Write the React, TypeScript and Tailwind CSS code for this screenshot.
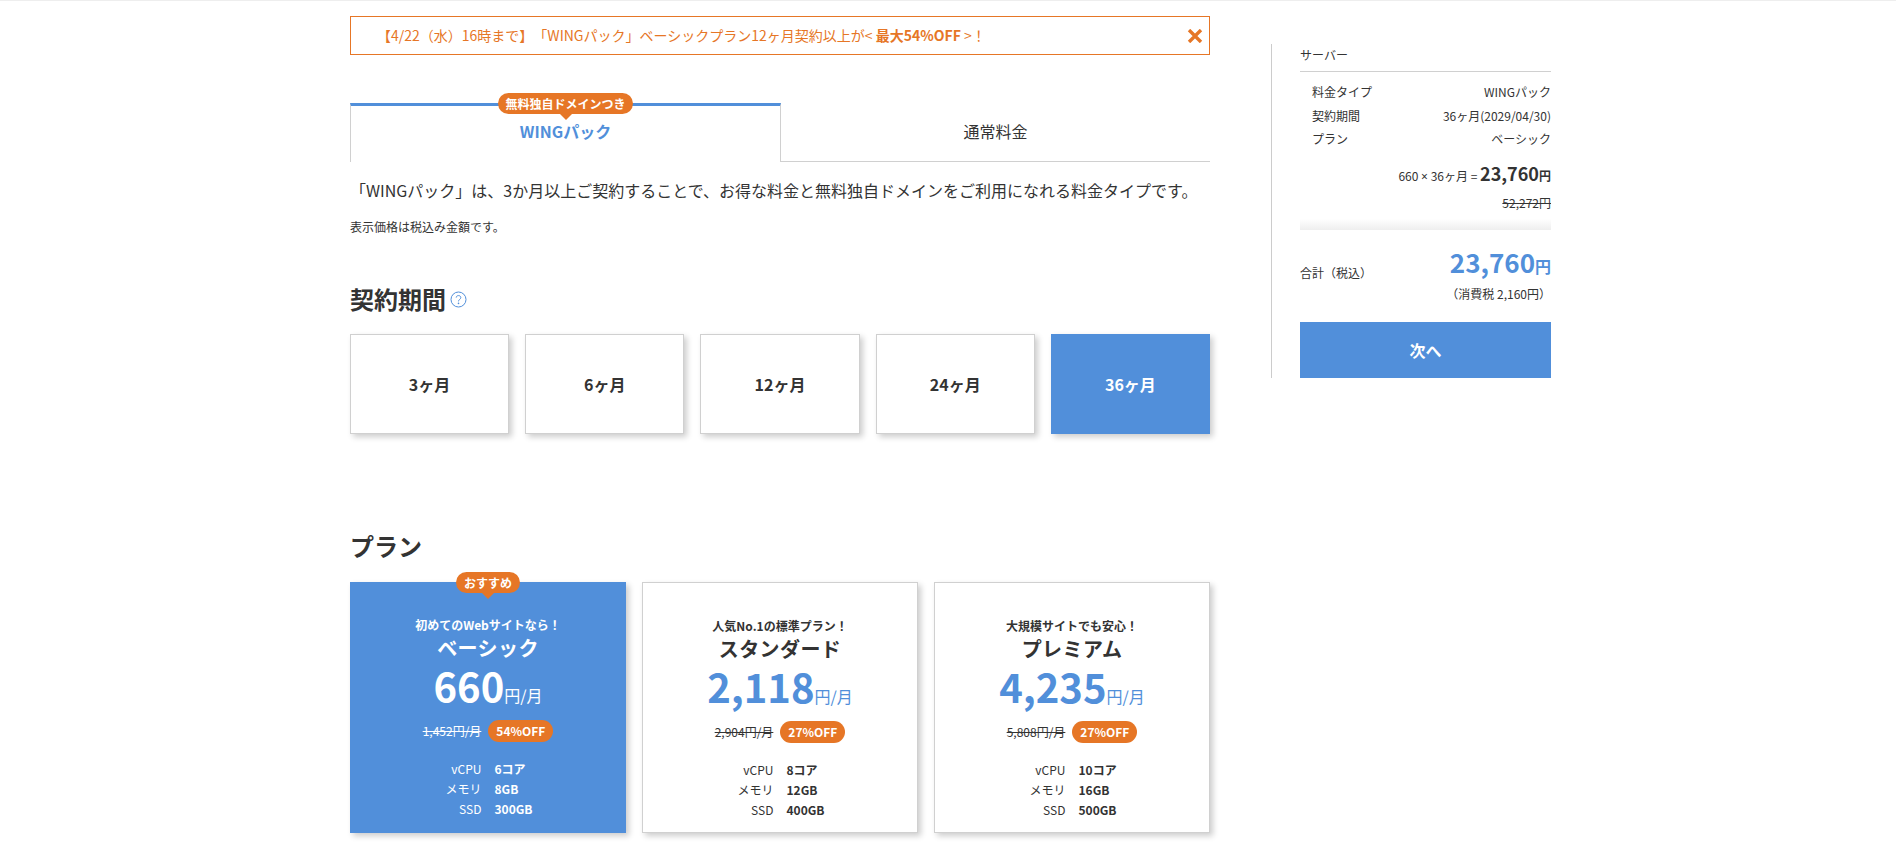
const plans = [
  { tag: "初めてのWebサイトなら！", name: "ベーシック", price: "660", old: "1,452円/月", off: "54%OFF", cpu: "6コア", mem: "8GB", ssd: "300GB", active: true },
  { tag: "人気No.1の標準プラン！", name: "スタンダード", price: "2,118", old: "2,904円/月", off: "27%OFF", cpu: "8コア", mem: "12GB", ssd: "400GB", active: false },
  { tag: "大規模サイトでも安心！", name: "プレミアム", price: "4,235", old: "5,808円/月", off: "27%OFF", cpu: "10コア", mem: "16GB", ssd: "500GB", active: false },
];

const terms = ["3ヶ月", "6ヶ月", "12ヶ月", "24ヶ月", "36ヶ月"];

const Bubble = ({ text, className }: { text: string; className: string }) => (
  <div className={`absolute flex items-center justify-center rounded-full bg-[#e67626] text-[12px] font-bold text-white ${className}`}>
    {text}
    <span className="absolute left-1/2 top-full -ml-[6px] border-x-[6px] border-t-[6px] border-x-transparent border-t-[#e67626]" />
  </div>
);

const PlanCard = ({ plan }: { plan: (typeof plans)[number] }) => {
  const on = plan.active;
  return (
    <div
      className={`relative flex h-[251px] w-[276px] flex-col items-center pt-[34px] shadow-[3px_3px_6px_rgba(0,0,0,0.2)] ${
        on ? "bg-[#518fda] text-white" : "border border-[#d0d0d0] bg-white text-[#333]"
      }`}
    >
      {on && <Bubble text="おすすめ" className="left-[106px] -top-[10px] h-[21px] w-[64px]" />}
      <p className="text-[12px] font-bold leading-[18px]">{plan.tag}</p>
      <p className="-mt-[0.5px] text-[20px] font-bold leading-[28px] tracking-[0.02em]">{plan.name}</p>
      <p className={`-mt-[1.5px] flex items-baseline leading-[50px] ${on ? "text-white" : "text-[#518fda]"}`}>
        <span className="text-[40px] font-bold">{plan.price}</span>
        <span className="text-[16px]">円/月</span>
      </p>
      <div className="mt-0 flex items-center gap-[7px]">
        <span className="text-[12px] line-through">{plan.old}</span>
        <span className="flex h-[22px] w-[65px] items-center justify-center rounded-full bg-[#e67626] text-[12px] font-bold text-white">
          {plan.off}
        </span>
      </div>
      <div className="mt-[17px] grid grid-cols-[56px_56px] gap-x-[13px] text-[12px] leading-[20px]">
        <span className="text-right">vCPU</span>
        <span className="font-bold">{plan.cpu}</span>
        <span className="text-right">メモリ</span>
        <span className="font-bold">{plan.mem}</span>
        <span className="text-right">SSD</span>
        <span className="font-bold">{plan.ssd}</span>
      </div>
    </div>
  );
};

export default function App() {
  return (
    <div
      className="h-[864px] w-[1896px] overflow-hidden border-t border-[#eee] bg-white text-[#333] [text-spacing-trim:space-all]"
      style={{ fontFamily: '"Noto Sans CJK JP", "Noto Sans", sans-serif' }}
    >
      <div className="ml-[350px] flex items-start">
        {/* Main column */}
        <div className="w-[860px] pt-[15px]">
          <div className="flex h-[39px] items-center justify-between border border-[#e67626] pl-[26px] pr-[6px] text-[14px] text-[#e67626]">
            <p>
              【4/22（水）16時まで】「WINGパック」ベーシックプラン12ヶ月契約以上が&lt; <b>最大54%OFF</b> &gt;！
            </p>
            <svg width="16" height="14" viewBox="0 0 16 14">
              <path d="M2 1 L14 13 M14 1 L2 13" stroke="#e67626" strokeWidth="3.4" />
            </svg>
          </div>

          {/* Tabs */}
          <div className="mt-[48px] flex h-[59px]">
            <div className="relative flex flex-1 items-center justify-center border-x border-t-[3px] border-[#d0d0d0] border-t-[#518fda] pb-[6px] text-[16px] font-bold text-[#518fda]">
              <Bubble text="無料独自ドメインつき" className="left-[147px] -top-[13px] h-[21px] w-[135px]" />
              WINGパック
            </div>
            <div className="flex flex-1 items-center justify-center border-b border-[#d0d0d0] pb-[3px] text-[16px]">
              通常料金
            </div>
          </div>

          <p className="mt-[15px] text-[16px] leading-[26px]">
            「WINGパック」は、3か月以上ご契約することで、お得な料金と無料独自ドメインをご利用になれる料金タイプです。
          </p>
          <p className="mt-[15px] text-[12px] leading-[18px]">表示価格は税込み金額です。</p>

          <div className="mt-[45px] flex items-center gap-[4px]">
            <h2 className="text-[24px] font-bold leading-[36px]">契約期間</h2>
            <svg width="17" height="17" viewBox="0 0 17 17" className="mt-[1px]">
              <circle cx="8.5" cy="8.5" r="7.5" fill="none" stroke="#518fda" strokeWidth="1" />
              <path d="M6.2 6.6 C6.2 3.9 10.8 3.9 10.8 6.6 C10.8 8.4 8.5 8.3 8.5 10.4" fill="none" stroke="#518fda" strokeWidth="1" />
              <circle cx="8.5" cy="12.4" r="0.8" fill="#518fda" />
            </svg>
          </div>

          <div className="mt-[17px] grid grid-cols-5 gap-x-[16px]">
            {terms.map((t, i) => (
              <div
                key={t}
                className={`flex h-[100px] items-center justify-center text-[16px] font-bold shadow-[3px_3px_6px_rgba(0,0,0,0.2)] ${
                  i === 4 ? "bg-[#518fda] text-white" : "border border-[#d0d0d0] bg-white"
                }`}
              >
                {t}
              </div>
            ))}
          </div>

          <h2 className="mt-[94px] text-[24px] font-bold leading-[36px]">プラン</h2>
          <div className="mt-[18px] flex justify-between">
            {plans.map((p) => (
              <PlanCard key={p.name} plan={p} />
            ))}
          </div>
        </div>

        {/* Summary */}
        <aside className="ml-[61px] mt-[43px] flex h-[334px] w-[281px] flex-col border-l border-[#ccc] pl-[28px] pr-[1px] text-[12px]">
          <p className="flex h-[28px] items-center border-b border-[#d0d0d0] pb-[6px]">サーバー</p>
          <div className="mt-[8px] flex flex-col pl-[12px] leading-[23.5px]">
            <div className="flex justify-between"><span>料金タイプ</span><span>WINGパック</span></div>
            <div className="flex justify-between"><span>契約期間</span><span>36ヶ月(2029/04/30)</span></div>
            <div className="flex justify-between"><span>プラン</span><span>ベーシック</span></div>
          </div>
          <p className="mt-[7px] text-right leading-[30px]">
            660 <span className="font-['Noto_Sans']">×</span> 36ヶ月 = <span className="text-[18px] font-bold">23,760</span><span className="font-bold">円</span>
          </p>
          <p className="mt-[2px] text-right leading-[18px] line-through">52,272円</p>
          <div className="mt-[7px] h-[11px] bg-gradient-to-b from-white to-[#eee]" />
          <div className="mt-[13px] flex items-center justify-between">
            <span className="mt-[17px]">合計（税込）</span>
            <span className="font-bold leading-[38px] text-[#518fda]">
              <span className="text-[26px]">23,760</span><span className="text-[16px]">円</span>
            </span>
          </div>
          <p className="-mt-[1.5px] text-right leading-[18px]">（消費税 2,160円）</p>
          <div className="mt-auto flex h-[56px] items-center justify-center bg-[#518fda] text-[16px] font-bold text-white">次へ</div>
        </aside>
      </div>
    </div>
  );
}
